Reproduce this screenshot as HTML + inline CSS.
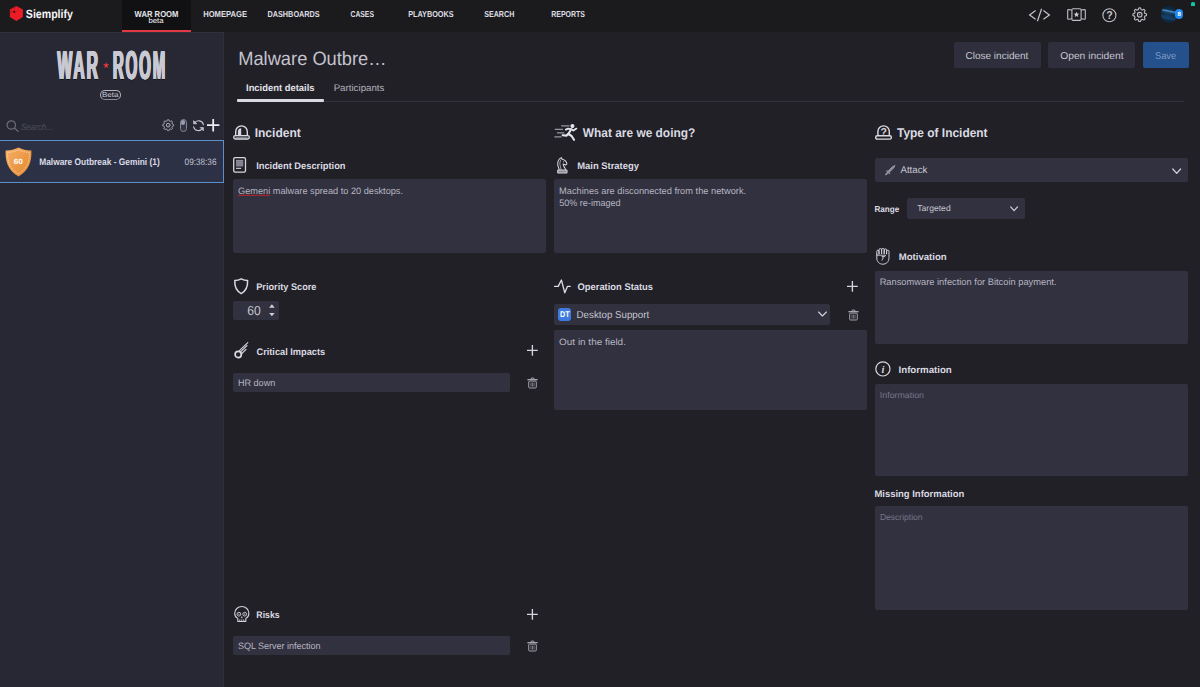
<!DOCTYPE html>
<html><head><meta charset="utf-8"><title>War Room</title>
<style>
*{box-sizing:border-box;margin:0;padding:0}
html,body{width:1200px;height:687px;overflow:hidden;background:#212026;font-family:"Liberation Sans",sans-serif;color:#d4d4dc}
.a{position:absolute}
.t{position:absolute;white-space:nowrap;transform-origin:0 0;text-rendering:geometricPrecision}
.box{position:absolute;background:#32313f;border-radius:2px}
svg{position:absolute;overflow:visible}
</style></head><body>
<!-- backgrounds -->
<div class="a" style="left:0;top:0;width:1200px;height:32px;background:#1b1b1e"></div>
<div class="a" style="left:0;top:32px;width:224px;height:655px;background:#272833;border-top:1px solid #2f303e;border-right:1.4px solid #2e2f3d"></div>
<div class="a" style="left:224px;top:32px;width:976px;height:655px;background:#212026"></div>
<!-- top bar -->
<div class="a" style="left:122px;top:0;width:69px;height:32px;background:#111113;border-bottom:2px solid #e23a44"></div>
<svg style="left:9px;top:5px" width="16" height="17" viewBox="0 0 16 17"><path d="M7.4 1.1 L13.9 4.6 L13.9 12 L7.4 16.1 L0.9 12 L0.9 4.6 Z" fill="#ea1d27"/><path d="M0.9 4.6 L5.1 6.8 L0.9 9.6 Z" fill="#d21a23"/><path d="M7.4 0.9 L5.6 6 L4.4 3 Z" fill="#d21a23"/><path d="M5.2 6.8 L12.6 4.6 L6.2 7.6 L7 10.6 Z" fill="#cf1922"/><circle cx="5.2" cy="6.8" r="1.05" fill="#2a0c10"/></svg>
<svg style="left:1028px;top:8px" width="23" height="14" viewBox="0 0 23 14" fill="none" stroke="#c3c3cc" stroke-width="1.2"><path d="M7.6 2.6 L1.6 6.9 L7.6 11.2"/><path d="M13.6 0.8 L9.4 13.2"/><path d="M15.4 2.6 L21.4 6.9 L15.4 11.2"/></svg>
<svg style="left:1067px;top:8px" width="19" height="13" viewBox="0 0 19 13" fill="none" stroke="#bfbfc8" stroke-width="1.1" stroke-linejoin="round"><rect x="4.9" y="0.7" width="9.2" height="11.7" rx="1.1"/><path d="M4.9 2 L1.6 1.6 Q0.7 1.5 0.7 2.4 V10.4 Q0.7 11.3 1.6 11.2 L4.9 10.8"/><path d="M14.1 2 L17.4 1.6 Q18.3 1.5 18.3 2.4 V10.4 Q18.3 11.3 17.4 11.2 L14.1 10.8"/><path d="M9.5 3.7 l0.85 1.8 1.95 .2 -1.5 1.3 .45 1.95 -1.75 -1 -1.75 1 .45 -1.95 -1.5 -1.3 1.95 -.2z" fill="#c8c8d0" stroke="none"/></svg>
<svg style="left:1101.5px;top:7.5px" width="15" height="15" viewBox="0 0 15 15" fill="none" stroke="#bfbfc8" stroke-width="1.1"><circle cx="7.4" cy="7.3" r="6.5"/><text x="7.4" y="11" font-size="10.6" font-weight="bold" text-anchor="middle" fill="#c8c8d0" stroke="none" font-family="Liberation Sans, sans-serif">?</text></svg>
<svg style="left:1132px;top:7px;color:#bfbfc8" width="15.4" height="15.4" viewBox="0 0 24 24" fill="none" stroke="#bfbfc8" stroke-width="1.7" stroke-linejoin="round"><circle cx="12" cy="12" r="3.6"/><circle cx="12" cy="12" r="0.9" fill="currentColor" stroke="none"/><path d="M12.00 1.40 L12.42 1.41 L12.83 1.43 L13.25 1.47 L13.57 2.06 L13.83 2.78 L14.04 3.51 L14.23 4.11 L14.53 4.20 L14.84 4.31 L15.14 4.42 L15.43 4.55 L15.72 4.69 L16.01 4.85 L16.56 4.55 L17.22 4.18 L17.92 3.86 L18.56 3.68 L18.88 3.94 L19.20 4.22 L19.50 4.50 L19.78 4.80 L20.06 5.12 L20.32 5.44 L20.14 6.08 L19.82 6.78 L19.45 7.44 L19.15 7.99 L19.31 8.28 L19.45 8.57 L19.58 8.86 L19.69 9.16 L19.80 9.47 L19.89 9.77 L20.49 9.96 L21.22 10.17 L21.94 10.43 L22.53 10.75 L22.57 11.17 L22.59 11.58 L22.60 12.00 L22.59 12.42 L22.57 12.83 L22.53 13.25 L21.94 13.57 L21.22 13.83 L20.49 14.04 L19.89 14.23 L19.80 14.53 L19.69 14.84 L19.58 15.14 L19.45 15.43 L19.31 15.72 L19.15 16.01 L19.45 16.56 L19.82 17.22 L20.14 17.92 L20.32 18.56 L20.06 18.88 L19.78 19.20 L19.50 19.50 L19.20 19.78 L18.88 20.06 L18.56 20.32 L17.92 20.14 L17.22 19.82 L16.56 19.45 L16.01 19.15 L15.72 19.31 L15.43 19.45 L15.14 19.58 L14.84 19.69 L14.53 19.80 L14.23 19.89 L14.04 20.49 L13.83 21.22 L13.57 21.94 L13.25 22.53 L12.83 22.57 L12.42 22.59 L12.00 22.60 L11.58 22.59 L11.17 22.57 L10.75 22.53 L10.43 21.94 L10.17 21.22 L9.96 20.49 L9.77 19.89 L9.47 19.80 L9.16 19.69 L8.86 19.58 L8.57 19.45 L8.28 19.31 L7.99 19.15 L7.44 19.45 L6.78 19.82 L6.08 20.14 L5.44 20.32 L5.12 20.06 L4.80 19.78 L4.50 19.50 L4.22 19.20 L3.94 18.88 L3.68 18.56 L3.86 17.92 L4.18 17.22 L4.55 16.56 L4.85 16.01 L4.69 15.72 L4.55 15.43 L4.42 15.14 L4.31 14.84 L4.20 14.53 L4.11 14.23 L3.51 14.04 L2.78 13.83 L2.06 13.57 L1.47 13.25 L1.43 12.83 L1.41 12.42 L1.40 12.00 L1.41 11.58 L1.43 11.17 L1.47 10.75 L2.06 10.43 L2.78 10.17 L3.51 9.96 L4.11 9.77 L4.20 9.47 L4.31 9.16 L4.42 8.86 L4.55 8.57 L4.69 8.28 L4.85 7.99 L4.55 7.44 L4.18 6.78 L3.86 6.08 L3.68 5.44 L3.94 5.12 L4.22 4.80 L4.50 4.50 L4.80 4.22 L5.12 3.94 L5.44 3.68 L6.08 3.86 L6.78 4.18 L7.44 4.55 L7.99 4.85 L8.28 4.69 L8.57 4.55 L8.86 4.42 L9.16 4.31 L9.47 4.20 L9.77 4.11 L9.96 3.51 L10.17 2.78 L10.43 2.06 L10.75 1.47 L11.17 1.43 L11.58 1.41 L12.00 1.40 Z"/></svg>
<div class="a" style="left:1160.8px;top:5.8px;width:16.4px;height:17.2px;border-radius:9px;overflow:hidden;background:linear-gradient(192deg,rgba(0,0,0,0) 0%,rgba(0,0,0,0) 26%,rgba(90,160,225,.85) 33%,rgba(40,100,160,.5) 40%,rgba(0,0,0,0) 50%,rgba(30,90,150,.45) 68%,rgba(0,0,0,0) 80%),radial-gradient(circle at 45% 50%,#123a58 0%,#0c2840 60%,#0a1c2e 100%)"></div>
<div class="a" style="left:1175px;top:9px;width:8.3px;height:9.7px;border-radius:4.2px;background:#2189f0"></div>
<div class="t" style="left:1177.5px;top:11.7px;font-size:6.2px;line-height:6.2px;font-weight:bold;color:#fff">8</div>
<div class="a" style="left:1190.6px;top:2.2px;width:4.2px;height:4px;border-radius:1.5px 1.5px .5px .5px;background:#12c4a4"></div>
<!-- sidebar -->
<svg style="left:103.2px;top:62px" width="6.4" height="6.2" viewBox="0 0 10 9.6"><path d="M5 0 L6.2 3.6 H10 L6.9 5.9 L8.1 9.6 L5 7.3 L1.9 9.6 L3.1 5.9 L0 3.6 H3.8 Z" fill="#e8363c"/></svg>
<div class="a" style="left:99.7px;top:90.1px;width:21.4px;height:9.7px;border:1px solid #b4b4c0;border-bottom:1.4px solid #8c8c9a;border-radius:5px"></div>
<svg style="left:6px;top:119.5px" width="13" height="12" viewBox="0 0 13 12" fill="none" stroke="#676878" stroke-width="1.3" stroke-linecap="round"><circle cx="5.3" cy="5" r="4.2"/><path d="M8.4 8 L12 11.2"/></svg>
<svg style="left:161.6px;top:119.1px;color:#b8b8c4" width="12.4" height="12.4" viewBox="0 0 24 24" fill="none" stroke="#b8b8c4" stroke-width="1.9" stroke-linejoin="round"><circle cx="12" cy="12" r="3.6"/><circle cx="12" cy="12" r="0.9" fill="currentColor" stroke="none"/><path d="M12.00 1.40 L12.42 1.41 L12.83 1.43 L13.25 1.47 L13.57 2.06 L13.83 2.78 L14.04 3.51 L14.23 4.11 L14.53 4.20 L14.84 4.31 L15.14 4.42 L15.43 4.55 L15.72 4.69 L16.01 4.85 L16.56 4.55 L17.22 4.18 L17.92 3.86 L18.56 3.68 L18.88 3.94 L19.20 4.22 L19.50 4.50 L19.78 4.80 L20.06 5.12 L20.32 5.44 L20.14 6.08 L19.82 6.78 L19.45 7.44 L19.15 7.99 L19.31 8.28 L19.45 8.57 L19.58 8.86 L19.69 9.16 L19.80 9.47 L19.89 9.77 L20.49 9.96 L21.22 10.17 L21.94 10.43 L22.53 10.75 L22.57 11.17 L22.59 11.58 L22.60 12.00 L22.59 12.42 L22.57 12.83 L22.53 13.25 L21.94 13.57 L21.22 13.83 L20.49 14.04 L19.89 14.23 L19.80 14.53 L19.69 14.84 L19.58 15.14 L19.45 15.43 L19.31 15.72 L19.15 16.01 L19.45 16.56 L19.82 17.22 L20.14 17.92 L20.32 18.56 L20.06 18.88 L19.78 19.20 L19.50 19.50 L19.20 19.78 L18.88 20.06 L18.56 20.32 L17.92 20.14 L17.22 19.82 L16.56 19.45 L16.01 19.15 L15.72 19.31 L15.43 19.45 L15.14 19.58 L14.84 19.69 L14.53 19.80 L14.23 19.89 L14.04 20.49 L13.83 21.22 L13.57 21.94 L13.25 22.53 L12.83 22.57 L12.42 22.59 L12.00 22.60 L11.58 22.59 L11.17 22.57 L10.75 22.53 L10.43 21.94 L10.17 21.22 L9.96 20.49 L9.77 19.89 L9.47 19.80 L9.16 19.69 L8.86 19.58 L8.57 19.45 L8.28 19.31 L7.99 19.15 L7.44 19.45 L6.78 19.82 L6.08 20.14 L5.44 20.32 L5.12 20.06 L4.80 19.78 L4.50 19.50 L4.22 19.20 L3.94 18.88 L3.68 18.56 L3.86 17.92 L4.18 17.22 L4.55 16.56 L4.85 16.01 L4.69 15.72 L4.55 15.43 L4.42 15.14 L4.31 14.84 L4.20 14.53 L4.11 14.23 L3.51 14.04 L2.78 13.83 L2.06 13.57 L1.47 13.25 L1.43 12.83 L1.41 12.42 L1.40 12.00 L1.41 11.58 L1.43 11.17 L1.47 10.75 L2.06 10.43 L2.78 10.17 L3.51 9.96 L4.11 9.77 L4.20 9.47 L4.31 9.16 L4.42 8.86 L4.55 8.57 L4.69 8.28 L4.85 7.99 L4.55 7.44 L4.18 6.78 L3.86 6.08 L3.68 5.44 L3.94 5.12 L4.22 4.80 L4.50 4.50 L4.80 4.22 L5.12 3.94 L5.44 3.68 L6.08 3.86 L6.78 4.18 L7.44 4.55 L7.99 4.85 L8.28 4.69 L8.57 4.55 L8.86 4.42 L9.16 4.31 L9.47 4.20 L9.77 4.11 L9.96 3.51 L10.17 2.78 L10.43 2.06 L10.75 1.47 L11.17 1.43 L11.58 1.41 L12.00 1.40 Z"/></svg>
<div class="a" style="left:179.8px;top:119.1px;width:7px;height:12.8px;border-radius:3.5px;background:#343544;border:1px solid #858698"></div>
<div class="a" style="left:181.2px;top:120.4px;width:4.2px;height:4.6px;border-radius:2.1px;background:#9c9dac"></div>
<svg style="left:192px;top:120px" width="13" height="11.4" viewBox="0 0 13 11.4" fill="none" stroke="#c0c0cc" stroke-width="1.15" stroke-linecap="round"><g transform="translate(13,0) scale(-1,1)"><path d="M1.6 4.6 A4.9 4.9 0 0 1 10.6 3.2"/><path d="M11.4 6.8 A4.9 4.9 0 0 1 2.4 8.2"/><path d="M11.4 1 V3.8 H8.6 Z" fill="#c0c0cc" stroke-linejoin="round" stroke-width=".8"/><path d="M1.6 10.4 V7.6 H4.4 Z" fill="#c0c0cc" stroke-linejoin="round" stroke-width=".8"/></g></svg>
<svg style="left:207.3px;top:119.4px" width="12.4" height="12.4" viewBox="0 0 12 12" stroke="#ececf2" stroke-width="1.7"><path d="M6 0 V12 M0 6 H12"/></svg>
<div class="a" style="left:0;top:140px;width:223.5px;height:43px;background:#2d3146;border:1px solid #5b8fc9;border-left:none"></div>
<svg style="left:5px;top:147px" width="27" height="30" viewBox="0 0 27 30"><defs><linearGradient id="sg" x1="0" y1="0" x2="1" y2="1"><stop offset="0" stop-color="#f6b066"/><stop offset="1" stop-color="#e2862c"/></linearGradient></defs><path d="M13.5 0.6 C9.5 2.6 5.5 3.4 0.6 3.6 C0.2 14 2.6 23.4 13.5 29.4 C24.4 23.4 26.8 14 26.4 3.6 C21.5 3.4 17.5 2.6 13.5 0.6 Z" fill="url(#sg)"/><path d="M13.5 2.8 C10 4.4 6.6 5.2 2.6 5.4 C2.4 14 4.6 21.8 13.5 27 C22.4 21.8 24.6 14 24.4 5.4 C20.4 5.2 17 4.4 13.5 2.8 Z" fill="none" stroke="#fbe3c4" stroke-width="0.7" stroke-dasharray="1.4 0.9"/></svg>
<!-- main head -->
<div class="a" style="left:237px;top:100.6px;width:947px;height:1px;background:#33333f"></div>
<div class="a" style="left:237px;top:99.2px;width:87px;height:2.6px;background:#d9d9e1;border-radius:1px"></div>
<div class="box" style="left:953.5px;top:42px;width:87.3px;height:26px;background:#2f2e3d"></div>
<div class="box" style="left:1048.3px;top:42px;width:87.1px;height:26px;background:#2f2e3d"></div>
<div class="box" style="left:1143px;top:42px;width:45.5px;height:26px;background:#24508c"></div>
<!-- boxes col1 -->
<div class="box" style="left:233.3px;top:179.4px;width:313.1px;height:73.2px"></div>
<div class="box" style="left:233.3px;top:300.6px;width:45.7px;height:19.6px"></div>
<div class="box" style="left:233.3px;top:372.7px;width:276.5px;height:19px"></div>
<div class="box" style="left:233.3px;top:636.2px;width:276.5px;height:19.2px"></div>
<!-- boxes col2 -->
<div class="box" style="left:554.2px;top:179.4px;width:313.1px;height:73.2px"></div>
<div class="box" style="left:554.2px;top:304px;width:276.2px;height:20.7px"></div>
<div class="box" style="left:554.2px;top:329.5px;width:313.1px;height:80.5px"></div>
<div class="a" style="left:558.1px;top:307.7px;width:13.1px;height:13px;border-radius:3px;background:#3d7be0"></div>
<!-- boxes col3 -->
<div class="box" style="left:875px;top:157.6px;width:312.8px;height:24.7px"></div>
<div class="box" style="left:906.8px;top:197.9px;width:117.8px;height:20.7px"></div>
<div class="box" style="left:875px;top:270.6px;width:312.8px;height:73px"></div>
<div class="box" style="left:875px;top:383.6px;width:312.8px;height:92.7px"></div>
<div class="box" style="left:875px;top:505.9px;width:312.8px;height:103.8px"></div>
<!-- icons col1 -->
<svg style="left:233px;top:124.7px" width="17" height="15" viewBox="0 0 17 15" fill="none" stroke="#dcdce4" stroke-width="1.35"><path d="M2.7 10.4 V6.6 A5.8 5.8 0 0 1 14.3 6.6 V10.4"/><path d="M4.9 10.2 V6.8 Q4.9 3.6 8.2 3.3 V10.2 Z" fill="#d6d6de" stroke="none"/><rect x="0.7" y="10.6" width="15.6" height="3.4" rx="1.7"/><path d="M2.5 12.3 H14.5" stroke="#8e8e9a" stroke-width="1"/></svg>
<svg style="left:233px;top:157.3px" width="13.2" height="16" viewBox="0 0 13.2 16" fill="none" stroke="#d6d6de" stroke-width="1.3"><rect x="0.7" y="0.7" width="11.8" height="14.4" rx="1.4"/><rect x="3" y="2.9" width="7.2" height="6.6" fill="#8e8e9c" stroke="none"/><path d="M3 4.6 H10.2 M3 6.4 H10.2 M3 8.2 H10.2" stroke="#6a6a78" stroke-width=".6"/><path d="M3 11.3 H8.2" stroke="#e6e6ee" stroke-width="1"/></svg>
<svg style="left:234px;top:278px" width="14.4" height="16.4" viewBox="0 0 14.4 16.4" fill="none" stroke="#dadae2" stroke-width="1.5" stroke-linejoin="round"><path d="M7.2 0.8 C5 1.9 3 2.4 0.8 2.5 C0.5 8 1.8 12.6 7.2 15.6 C12.6 12.6 13.9 8 13.6 2.5 C11.4 2.4 9.4 1.9 7.2 0.8 Z"/></svg>
<svg style="left:233.8px;top:342px" width="15" height="17" viewBox="0 0 15 17" fill="none" stroke="#dadae2" stroke-linecap="round"><circle cx="4.2" cy="12.5" r="3.1" stroke-width="1.7"/><path d="M5.4 8.6 L13.8 0.6" stroke-width="1.1"/><path d="M7 9.4 L13 3.6" stroke-width="1.2"/><path d="M8 11.4 L12 7.4" stroke-width="1.2"/></svg>
<svg style="left:233.6px;top:606px" width="15.6" height="16.2" viewBox="0 0 15.6 16.2" fill="none" stroke="#d0d0da" stroke-width="1.1" stroke-linejoin="round"><path d="M3.8 12.4 C1.6 11.2 0.7 9.4 0.7 7.4 A7.1 6.9 0 0 1 14.9 7.4 C14.9 9.4 14 11.2 11.8 12.4"/><path d="M3.8 12.2 V15.5 H11.8 V12.2"/><path d="M5.8 13.4 V15.5 M7.8 13.4 V15.5 M9.8 13.4 V15.5" stroke-width=".9"/><circle cx="4.9" cy="8.2" r="1.9" stroke-width=".9"/><circle cx="10.7" cy="8.2" r="1.9" stroke-width=".9"/><circle cx="4.9" cy="8.2" r=".6" fill="#d0d0da" stroke="none"/><circle cx="10.7" cy="8.2" r=".6" fill="#d0d0da" stroke="none"/><path d="M7.8 10.6 L7.2 11.8 H8.4 Z" fill="#d0d0da" stroke-width=".5"/></svg>
<svg style="left:269px;top:304px" width="6" height="12.4" viewBox="0 0 6 12.4" fill="#d0d0da"><path d="M2.9 0.3 L5.7 3.7 H0.1 Z"/><path d="M2.9 12.2 L5.6 9 H0.2 Z"/></svg>
<!-- plus + trash col1 -->
<svg style="left:526.6px;top:345.2px" width="10.8" height="10.8" viewBox="0 0 10.8 10.8" stroke="#d4d4dc" stroke-width="1.35"><path d="M5.4 0 V10.8 M0 5.4 H10.8"/></svg>
<svg style="left:526.6px;top:608.8px" width="10.8" height="10.8" viewBox="0 0 10.8 10.8" stroke="#d4d4dc" stroke-width="1.35"><path d="M5.4 0 V10.8 M0 5.4 H10.8"/></svg>
<svg id="tr1" style="left:527px;top:376.8px" width="11" height="11.6" viewBox="0 0 11 11.6" fill="none" stroke="#a2a2ae" stroke-width="1"><path d="M0.4 2.7 H10.6" stroke="#b4b4c0" stroke-width="1.2"/><path d="M3.7 2.2 C3.9 0.5 7.1 0.5 7.3 2.2" stroke="#b4b4c0"/><rect x="1.7" y="4.1" width="7.6" height="6.9" rx="0.9"/><path d="M4 5.6 V9.6 M5.5 5.6 V9.6 M7 5.6 V9.6" stroke-width=".8" stroke="#8a8a98"/></svg>
<svg style="left:527px;top:640.4px" width="11" height="11.6" viewBox="0 0 11 11.6" fill="none" stroke="#a2a2ae" stroke-width="1"><path d="M0.4 2.7 H10.6" stroke="#b4b4c0" stroke-width="1.2"/><path d="M3.7 2.2 C3.9 0.5 7.1 0.5 7.3 2.2" stroke="#b4b4c0"/><rect x="1.7" y="4.1" width="7.6" height="6.9" rx="0.9"/><path d="M4 5.6 V9.6 M5.5 5.6 V9.6 M7 5.6 V9.6" stroke-width=".8" stroke="#8a8a98"/></svg>
<!-- icons col2 -->
<svg style="left:553.6px;top:124px" width="24" height="17" viewBox="0 0 24 17" fill="none" stroke-linecap="round"><path d="M7.6 1.8 H15 M1.2 5.3 H8.6 M3.4 8.9 H9.8 M0.8 12.8 H7.2" stroke="#9696a4" stroke-width="1.2"/><circle cx="18.4" cy="2.1" r="2.05" fill="#e4e4ec"/><path d="M11.8 5.6 L14 4.6 L17.4 5.2 L19.4 6.6 L22.4 4.6" stroke="#e4e4ec" stroke-width="1.8" stroke-linejoin="round"/><path d="M17 5.4 L14.4 10 L17.6 12 L20 15.8" stroke="#e4e4ec" stroke-width="2.1" stroke-linejoin="round"/><path d="M14.6 9.6 L12.4 11.6 L8.6 11.2" stroke="#e4e4ec" stroke-width="2.1" stroke-linejoin="round"/></svg>
<svg style="left:557px;top:156.6px" width="10.6" height="16.8" viewBox="0 0 10.6 16.8" fill="none" stroke="#d4d4dc" stroke-width="1.05" stroke-linejoin="round" stroke-linecap="round"><path d="M2.2 12.8 C2 10.8 0.7 9.6 0.7 7 C0.7 3.8 2.2 1.6 4.4 0.6 L5.2 2.2 C7.6 2.8 9.6 5 9.9 6.9 L8.6 8.1 L6.1 7.1 C6.1 9.4 8.3 10.6 8.5 12.8"/><path d="M3.9 2.8 C2.7 4.6 2.5 7.2 3.4 9.4 C3.8 10.4 4 11.6 4 12.8" stroke-width=".85" stroke="#b8b8c4"/><circle cx="6.5" cy="4.7" r=".55" fill="#d4d4dc" stroke="none"/><rect x="0.7" y="13" width="9.3" height="3.1" rx=".5" fill="#8a8a98"/></svg>
<svg style="left:553.6px;top:278.6px" width="17" height="15" viewBox="0 0 17 15" fill="none" stroke="#dedee6" stroke-width="1.3" stroke-linejoin="round" stroke-linecap="round"><path d="M0.6 7.4 H4.2 L7.4 1 L10.8 13.8 L13.4 7.4 H16.2"/></svg>
<svg style="left:847.4px;top:280.7px" width="10.8" height="10.8" viewBox="0 0 10.8 10.8" stroke="#d4d4dc" stroke-width="1.35"><path d="M5.4 0 V10.8 M0 5.4 H10.8"/></svg>
<svg style="left:847.6px;top:308.8px" width="11" height="11.6" viewBox="0 0 11 11.6" fill="none" stroke="#a2a2ae" stroke-width="1"><path d="M0.4 2.7 H10.6" stroke="#b4b4c0" stroke-width="1.2"/><path d="M3.7 2.2 C3.9 0.5 7.1 0.5 7.3 2.2" stroke="#b4b4c0"/><rect x="1.7" y="4.1" width="7.6" height="6.9" rx="0.9"/><path d="M4 5.6 V9.6 M5.5 5.6 V9.6 M7 5.6 V9.6" stroke-width=".8" stroke="#8a8a98"/></svg>
<svg style="left:818px;top:311.4px" width="9" height="6" viewBox="0 0 9 6" fill="none" stroke="#d0d0da" stroke-width="1.15" stroke-linecap="round" stroke-linejoin="round"><path d="M0.6 1 L4.4 5 L8.4 1"/></svg>
<!-- icons col3 -->
<svg style="left:874.6px;top:124.6px" width="17" height="15" viewBox="0 0 17 15" fill="none" stroke="#dcdce4" stroke-width="1.4"><path d="M2.9 10.6 V6.6 A5.7 5.7 0 0 1 14.3 6.6 V10.6"/><rect x="0.7" y="10.8" width="15.7" height="3.3" rx="1.6"/><text x="8.6" y="11.4" font-size="10.4" font-weight="bold" text-anchor="middle" fill="#d6d6de" stroke="none" font-family="Liberation Sans, sans-serif">?</text></svg>
<svg style="left:885px;top:164.6px" width="10.4" height="10.4" viewBox="0 0 10.4 10.4" fill="none" stroke="#9494a2" stroke-linecap="round"><path d="M0.9 9.5 L2.8 7.6" stroke-width="1.7"/><path d="M2.6 6.6 L7.6 1.6 L10 0.4 L8.8 2.8 L3.8 7.8 Z" fill="#9494a2" stroke-width=".9" stroke-linejoin="round"/><path d="M1.7 5.7 L4.7 8.7" stroke-width="1.1"/></svg>
<svg style="left:1171.8px;top:167.6px" width="9.4" height="6.6" viewBox="0 0 9.4 6.6" fill="none" stroke="#d0d0da" stroke-width="1.3" stroke-linecap="round" stroke-linejoin="round"><path d="M0.8 1 L4.7 5.4 L8.6 1"/></svg>
<svg style="left:1009.6px;top:206px" width="8.2" height="5.8" viewBox="0 0 8.2 5.8" fill="none" stroke="#d0d0da" stroke-width="1.2" stroke-linecap="round" stroke-linejoin="round"><path d="M0.7 0.9 L4.1 4.7 L7.5 0.9"/></svg>
<svg style="left:876.4px;top:247.6px" width="13.8" height="16.8" viewBox="0 0 13.8 16.8" fill="none" stroke="#d0d0da" stroke-width="1" stroke-linejoin="round" stroke-linecap="round"><path d="M0.8 6.4 V3.4 Q0.8 2.2 1.9 2.2 Q3 2.2 3 3.4 V6.2"/><path d="M3 5.6 V1.8 Q3 0.6 4.3 0.6 Q5.6 0.6 5.6 1.8 V5.6"/><path d="M5.6 5.6 V1.6 Q5.6 0.5 6.9 0.5 Q8.2 0.5 8.2 1.6 V5.6"/><path d="M8.2 5.6 V2 Q8.2 0.9 9.4 0.9 Q10.6 0.9 10.6 2 V5.8"/><path d="M10.6 5.8 V3.2 Q10.6 2.2 11.8 2.2 Q13 2.2 13 3.4 V9.6 C13 14 10 16.2 6.9 16.2 C3.6 16.2 0.8 14 0.8 10 V6.4"/><path d="M0.8 7.2 H9.6 L8.8 8.6 H5.8 L7.4 9.6 L6 12.2" stroke-width=".9"/></svg>
<svg style="left:875px;top:361.2px" width="15.8" height="15.8" viewBox="0 0 15.8 15.8" fill="none" stroke="#d6d6de" stroke-width="1.2"><circle cx="7.9" cy="7.9" r="7.1"/><text x="7.9" y="11.6" font-size="10.5" font-style="italic" font-weight="bold" text-anchor="middle" fill="#d6d6de" stroke="none" font-family="Liberation Serif, serif">i</text></svg>
<svg style="left:238.2px;top:194.4px" width="32" height="2.4" viewBox="0 0 32 2.4" fill="none" stroke="#c8242a" stroke-width="1"><path d="M0 1.8 L1 0.8 L2 1.8 L3 0.8 L4 1.8 L5 0.8 L6 1.8 L7 0.8 L8 1.8 L9 0.8 L10 1.8 L11 0.8 L12 1.8 L13 0.8 L14 1.8 L15 0.8 L16 1.8 L17 0.8 L18 1.8 L19 0.8 L20 1.8 L21 0.8 L22 1.8 L23 0.8 L24 1.8 L25 0.8 L26 1.8 L27 0.8 L28 1.8 L29 0.8 L30 1.8 L31 0.8 L32 1.8"/></svg>

<div class="t" style="left:25px;top:7.642px;font-family:'Liberation Sans',sans-serif;font-size:12px;line-height:12px;font-weight:bold;color:#f6f6f8;transform:translateX(0.807px) scaleX(0.88334);">Siemplify</div>
<div class="t" style="left:134px;top:10.035px;font-family:'Liberation Sans',sans-serif;font-size:8.7px;line-height:8.7px;font-weight:bold;color:#e6e6ea;transform:translateX(0.588px) scaleX(0.88241);">WAR ROOM</div>
<div class="t" style="left:148px;top:16.867px;font-family:'Liberation Sans',sans-serif;font-size:7.6px;line-height:7.6px;font-weight:normal;color:#f6f6f8;transform:translateX(0.492px) scaleX(1.01555);">beta</div>
<div class="t" style="left:203px;top:10.035px;font-family:'Liberation Sans',sans-serif;font-size:8.7px;line-height:8.7px;font-weight:bold;color:#dedee2;transform:translateX(0.156px) scaleX(0.87921);">HOMEPAGE</div>
<div class="t" style="left:267px;top:10.035px;font-family:'Liberation Sans',sans-serif;font-size:8.7px;line-height:8.7px;font-weight:bold;color:#dedee2;transform:translateX(0.444px) scaleX(0.83981);">DASHBOARDS</div>
<div class="t" style="left:350px;top:10.035px;font-family:'Liberation Sans',sans-serif;font-size:8.7px;line-height:8.7px;font-weight:bold;color:#dedee2;transform:translateX(0.453px) scaleX(0.78525);">CASES</div>
<div class="t" style="left:408px;top:10.035px;font-family:'Liberation Sans',sans-serif;font-size:8.7px;line-height:8.7px;font-weight:bold;color:#dedee2;transform:translateX(0.159px) scaleX(0.83805);">PLAYBOOKS</div>
<div class="t" style="left:484px;top:10.035px;font-family:'Liberation Sans',sans-serif;font-size:8.7px;line-height:8.7px;font-weight:bold;color:#dedee2;transform:translateX(0.196px) scaleX(0.82059);">SEARCH</div>
<div class="t" style="left:551px;top:10.035px;font-family:'Liberation Sans',sans-serif;font-size:8.7px;line-height:8.7px;font-weight:bold;color:#dedee2;transform:translateX(0.302px) scaleX(0.80028);">REPORTS</div>
<div class="t" style="left:57px;top:45.986px;font-family:'Liberation Sans',sans-serif;font-size:40.3px;line-height:40.3px;font-weight:bold;color:#c9c9d3;transform:translateX(0.377px) scaleX(0.39018);letter-spacing:5px;text-shadow:0.8px 0 0 #c9c9d3,-0.8px 0 0 #c9c9d3,1.5px 0 0 #c9c9d3,-1.5px 0 0 #c9c9d3,0 1.2px 0.6px rgba(0,0,0,.6);">WAR</div>
<div class="t" style="left:112px;top:45.986px;font-family:'Liberation Sans',sans-serif;font-size:40.3px;line-height:40.3px;font-weight:bold;color:#c9c9d3;transform:translateX(0.881px) scaleX(0.37322);letter-spacing:5px;text-shadow:0.8px 0 0 #c9c9d3,-0.8px 0 0 #c9c9d3,1.5px 0 0 #c9c9d3,-1.5px 0 0 #c9c9d3,0 1.2px 0.6px rgba(0,0,0,.6);">ROOM</div>
<div class="t" style="left:102px;top:91.105px;font-family:'Liberation Sans',sans-serif;font-size:7.2px;line-height:7.2px;font-weight:normal;color:#c8c8d4;transform:translateX(0.005px) scaleX(1.10938);">Beta</div>
<div class="t" style="left:20px;top:122.912px;font-family:'Liberation Sans',sans-serif;font-size:9.2px;line-height:9.2px;font-weight:normal;color:#4d4e60;transform:translateX(0.634px) scaleX(0.87915);font-style:italic;">Search...</div>
<div class="t" style="left:13px;top:157.782px;font-family:'Liberation Sans',sans-serif;font-size:7.7px;line-height:7.7px;font-weight:bold;color:#ffffff;transform:translateX(0.741px) scaleX(1.07461);">60</div>
<div class="t" style="left:39px;top:158.158px;font-family:'Liberation Sans',sans-serif;font-size:9.5px;line-height:9.5px;font-weight:bold;color:#dcdce6;transform:translateX(0.162px) scaleX(0.88172);">Malware Outbreak - Gemini (1)</div>
<div class="t" style="left:184px;top:158.328px;font-family:'Liberation Sans',sans-serif;font-size:9.3px;line-height:9.3px;font-weight:normal;color:#c2c2ce;transform:translateX(0.573px) scaleX(0.88060);">09:38:36</div>
<div class="t" style="left:238px;top:49.647px;font-family:'Liberation Sans',sans-serif;font-size:19.2px;line-height:19.2px;font-weight:normal;color:#c3c3cf;transform:translateX(0.213px) scaleX(0.95279);">Malware Outbre…</div>
<div class="t" style="left:246px;top:83.874px;font-family:'Liberation Sans',sans-serif;font-size:9.6px;line-height:9.6px;font-weight:bold;color:#e2e2ea;transform:translateX(0.015px) scaleX(0.98043);">Incident details</div>
<div class="t" style="left:333px;top:83.874px;font-family:'Liberation Sans',sans-serif;font-size:9.6px;line-height:9.6px;font-weight:normal;color:#b2b2be;transform:translateX(0.642px) scaleX(1.01263);">Participants</div>
<div class="t" style="left:965px;top:51.635px;font-family:'Liberation Sans',sans-serif;font-size:10px;line-height:10px;font-weight:normal;color:#c6c6d0;transform:translateX(0.492px) scaleX(1.00115);">Close incident</div>
<div class="t" style="left:1060px;top:51.635px;font-family:'Liberation Sans',sans-serif;font-size:10px;line-height:10px;font-weight:normal;color:#c6c6d0;transform:translateX(0.220px) scaleX(1.02620);">Open incident</div>
<div class="t" style="left:1154px;top:51.635px;font-family:'Liberation Sans',sans-serif;font-size:10px;line-height:10px;font-weight:normal;color:#7f9bc6;transform:translateX(0.987px) scaleX(0.92361);">Save</div>
<div class="t" style="left:254px;top:126.734px;font-family:'Liberation Sans',sans-serif;font-size:12.6px;line-height:12.6px;font-weight:bold;color:#dadae2;transform:translateX(0.633px) scaleX(0.95819);">Incident</div>
<div class="t" style="left:256px;top:161.574px;font-family:'Liberation Sans',sans-serif;font-size:9.6px;line-height:9.6px;font-weight:bold;color:#dadae2;transform:translateX(0.178px) scaleX(0.96836);">Incident Description</div>
<div class="t" style="left:238px;top:187.328px;font-family:'Liberation Sans',sans-serif;font-size:9.3px;line-height:9.3px;font-weight:normal;color:#b6b6c2;transform:translateX(0.089px) scaleX(0.98794);">Gemeni malware spread to 20 desktops.</div>
<div class="t" style="left:256px;top:282.974px;font-family:'Liberation Sans',sans-serif;font-size:9.6px;line-height:9.6px;font-weight:bold;color:#dadae2;transform:translateX(0.200px) scaleX(0.95720);">Priority Score</div>
<div class="t" style="left:247px;top:303.995px;font-family:'Liberation Sans',sans-serif;font-size:13px;line-height:13px;font-weight:normal;color:#c6c6d0;transform:translateX(0.274px) scaleX(0.93033);">60</div>
<div class="t" style="left:256px;top:347.974px;font-family:'Liberation Sans',sans-serif;font-size:9.6px;line-height:9.6px;font-weight:bold;color:#dadae2;transform:translateX(0.513px) scaleX(0.95979);">Critical Impacts</div>
<div class="t" style="left:237px;top:379.128px;font-family:'Liberation Sans',sans-serif;font-size:9.3px;line-height:9.3px;font-weight:normal;color:#b6b6c2;transform:translateX(0.885px) scaleX(0.97710);">HR down</div>
<div class="t" style="left:256px;top:611.174px;font-family:'Liberation Sans',sans-serif;font-size:9.6px;line-height:9.6px;font-weight:bold;color:#dadae2;transform:translateX(0.316px) scaleX(0.91218);">Risks</div>
<div class="t" style="left:237px;top:642.028px;font-family:'Liberation Sans',sans-serif;font-size:9.3px;line-height:9.3px;font-weight:normal;color:#b6b6c2;transform:translateX(0.885px) scaleX(0.96743);">SQL Server infection</div>
<div class="t" style="left:582px;top:126.734px;font-family:'Liberation Sans',sans-serif;font-size:12.6px;line-height:12.6px;font-weight:bold;color:#dadae2;transform:translateX(0.843px) scaleX(0.94506);">What are we doing?</div>
<div class="t" style="left:577px;top:161.574px;font-family:'Liberation Sans',sans-serif;font-size:9.6px;line-height:9.6px;font-weight:bold;color:#dadae2;transform:translateX(0.164px) scaleX(0.98267);">Main Strategy</div>
<div class="t" style="left:558px;top:187.328px;font-family:'Liberation Sans',sans-serif;font-size:9.3px;line-height:9.3px;font-weight:normal;color:#b6b6c2;transform:translateX(0.998px) scaleX(0.99738);">Machines are disconnected from the network.</div>
<div class="t" style="left:559px;top:198.728px;font-family:'Liberation Sans',sans-serif;font-size:9.3px;line-height:9.3px;font-weight:normal;color:#b6b6c2;transform:translateX(0.172px) scaleX(0.97448);">50% re-imaged</div>
<div class="t" style="left:577px;top:282.974px;font-family:'Liberation Sans',sans-serif;font-size:9.6px;line-height:9.6px;font-weight:bold;color:#dadae2;transform:translateX(0.503px) scaleX(0.97745);">Operation Status</div>
<div class="t" style="left:559px;top:311.359px;font-family:'Liberation Sans',sans-serif;font-size:8.2px;line-height:8.2px;font-weight:bold;color:#ffffff;transform:translateX(0.911px) scaleX(0.88843);">DT</div>
<div class="t" style="left:576px;top:311.435px;font-family:'Liberation Sans',sans-serif;font-size:10px;line-height:10px;font-weight:normal;color:#c6c6d0;transform:translateX(0.575px) scaleX(0.97426);">Desktop Support</div>
<div class="t" style="left:559px;top:337.728px;font-family:'Liberation Sans',sans-serif;font-size:9.3px;line-height:9.3px;font-weight:normal;color:#b6b6c2;transform:translateX(0.119px) scaleX(1.06804);">Out in the field.</div>
<div class="t" style="left:897px;top:126.734px;font-family:'Liberation Sans',sans-serif;font-size:12.6px;line-height:12.6px;font-weight:bold;color:#dadae2;transform:translateX(0.025px) scaleX(0.94678);">Type of Incident</div>
<div class="t" style="left:900px;top:165.904px;font-family:'Liberation Sans',sans-serif;font-size:9.8px;line-height:9.8px;font-weight:normal;color:#c6c6d0;transform:translateX(0.396px) scaleX(0.99461);">Attack</div>
<div class="t" style="left:874px;top:204.820px;font-family:'Liberation Sans',sans-serif;font-size:8.6px;line-height:8.6px;font-weight:bold;color:#dadae2;transform:translateX(0.514px) scaleX(0.94234);">Range</div>
<div class="t" style="left:917px;top:204.020px;font-family:'Liberation Sans',sans-serif;font-size:8.6px;line-height:8.6px;font-weight:normal;color:#c6c6d0;transform:translateX(0.331px) scaleX(0.99597);">Targeted</div>
<div class="t" style="left:898px;top:253.274px;font-family:'Liberation Sans',sans-serif;font-size:9.6px;line-height:9.6px;font-weight:bold;color:#dadae2;transform:translateX(0.667px) scaleX(1.00010);">Motivation</div>
<div class="t" style="left:879px;top:277.528px;font-family:'Liberation Sans',sans-serif;font-size:9.3px;line-height:9.3px;font-weight:normal;color:#b6b6c2;transform:translateX(0.646px) scaleX(1.00098);">Ransomware infection for Bitcoin payment.</div>
<div class="t" style="left:898px;top:365.674px;font-family:'Liberation Sans',sans-serif;font-size:9.6px;line-height:9.6px;font-weight:bold;color:#dadae2;transform:translateX(0.522px) scaleX(1.00930);">Information</div>
<div class="t" style="left:879px;top:391.220px;font-family:'Liberation Sans',sans-serif;font-size:8.6px;line-height:8.6px;font-weight:normal;color:#77778a;transform:translateX(0.825px) scaleX(1.02710);">Information</div>
<div class="t" style="left:874px;top:489.674px;font-family:'Liberation Sans',sans-serif;font-size:9.6px;line-height:9.6px;font-weight:bold;color:#dadae2;transform:translateX(0.433px) scaleX(0.98502);">Missing Information</div>
<div class="t" style="left:879px;top:513.220px;font-family:'Liberation Sans',sans-serif;font-size:8.6px;line-height:8.6px;font-weight:normal;color:#77778a;transform:translateX(0.949px) scaleX(0.98958);">Description</div>
</body></html>
